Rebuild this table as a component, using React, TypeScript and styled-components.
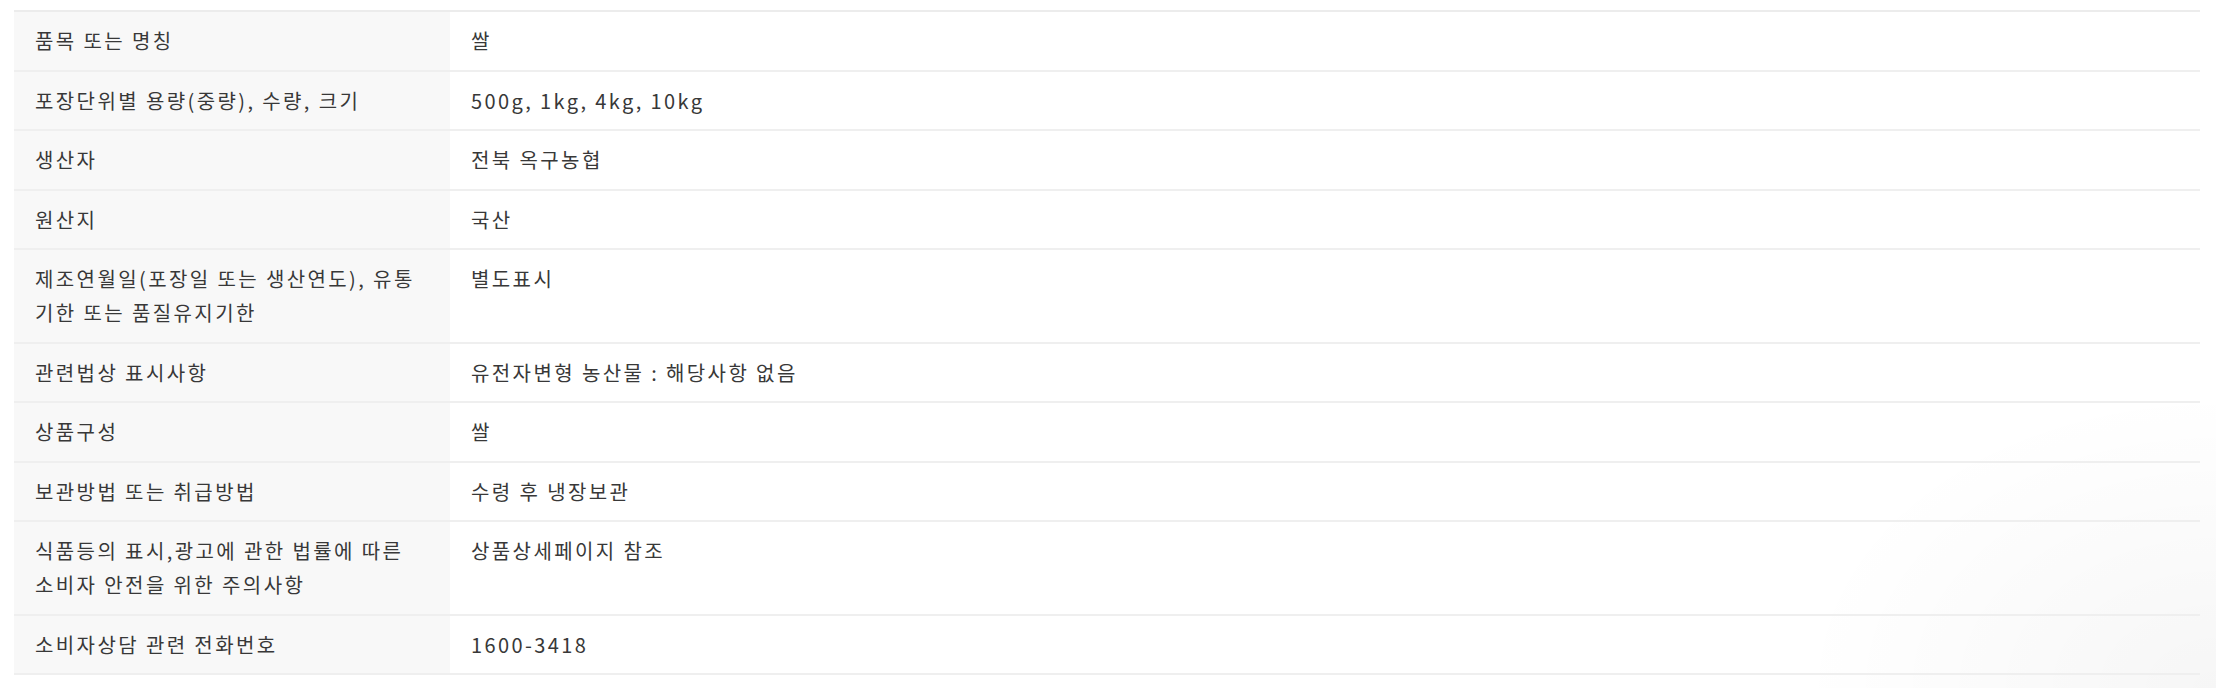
import React from "react";
import styled, {createGlobalStyle} from "styled-components";

const GlobalStyle = createGlobalStyle`
  html, body {
    margin: 0;
    padding: 0;
  }

  body {
    width: 2216px;
    height: 688px;
    overflow: hidden;
    background: radial-gradient(
        ellipse 420px 300px at 100% 100%,
        rgba(0, 0, 0, 0.035),
        rgba(0, 0, 0, 0) 100%
      ),
      #fff;
    font-family: "Noto Sans CJK KR", "Noto Sans", sans-serif;
    color: #383838;
  }
`;

const Page = styled.div`
  padding: 10px 16px 0 14px;
`;

const Table = styled.table`
  width: 100%;
  border-collapse: collapse;
  border-top: 2px solid #ececec;
  table-layout: fixed;
`;

const Row = styled.tr`
  border-bottom: 2px solid #efefef;
`;

const Label = styled.th`
  width: 388px;
  padding: 12px 27px 11.5px 21px;
  background: #f8f8f8;
  text-align: left;
  vertical-align: top;
  font-weight: 400;
  font-size: 20px;
  line-height: 34px;
  letter-spacing: 2.4px;
`;

const Value = styled.td`
  padding: 12px 21px 11.5px;
  vertical-align: top;
  font-size: 20px;
  line-height: 34px;
  letter-spacing: 2.4px;
`;

const rows: [string, string][] = [
  ["품목 또는 명칭", "쌀"],
  ["포장단위별 용량(중량), 수량, 크기", "500g, 1kg, 4kg, 10kg"],
  ["생산자", "전북 옥구농협"],
  ["원산지", "국산"],
  ["제조연월일(포장일 또는 생산연도), 유통기한 또는 품질유지기한", "별도표시"],
  ["관련법상 표시사항", "유전자변형 농산물 : 해당사항 없음"],
  ["상품구성", "쌀"],
  ["보관방법 또는 취급방법", "수령 후 냉장보관"],
  ["식품등의 표시,광고에 관한 법률에 따른 소비자 안전을 위한 주의사항", "상품상세페이지 참조"],
  ["소비자상담 관련 전화번호", "1600-3418"],
];

export default function App() {
  return (
    <>
      <GlobalStyle />
      <Page>
        <Table>
          <tbody>
            {rows.map(([label, value]) => (
              <Row key={label}>
                <Label>{label}</Label>
                <Value>{value}</Value>
              </Row>
            ))}
          </tbody>
        </Table>
      </Page>
    </>
  );
}
